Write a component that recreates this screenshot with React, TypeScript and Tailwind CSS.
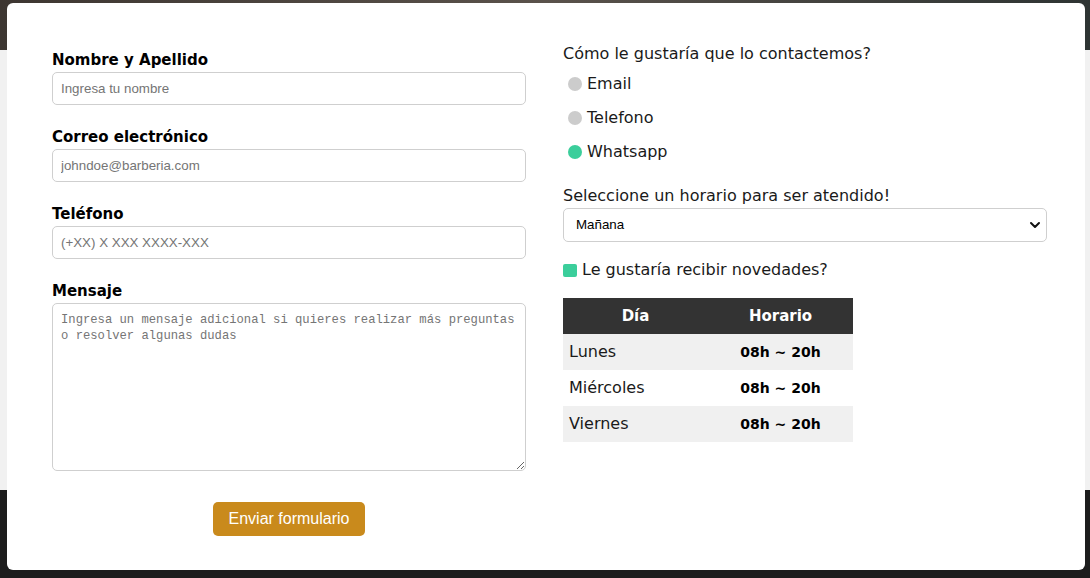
import React from 'react';

const horarios = [
  { dia: 'Lunes', hora: '08h ~ 20h' },
  { dia: 'Miércoles', hora: '08h ~ 20h' },
  { dia: 'Viernes', hora: '08h ~ 20h' },
];

const contactOptions = [
  { label: 'Email', checked: false },
  { label: 'Telefono', checked: false },
  { label: 'Whatsapp', checked: true },
];

const Field = ({ label, placeholder, type = 'text' }: { label: string; placeholder: string; type?: string }) => (
  <div className="mb-[20px]">
    <label className="block text-[15px] leading-[24px] font-bold text-black">{label}</label>
    <input
      type={type}
      placeholder={placeholder}
      className="block w-full h-[33px] px-[8px] border border-[#cfcfcf] rounded-[5px] bg-white text-[13.33px] font-['Liberation_Sans',Arial,sans-serif] placeholder:text-[#757575] outline-none"
    />
  </div>
);

export default function App() {
  return (
    <div className="relative w-full h-[578px] overflow-hidden font-['DejaVu_Sans',sans-serif]">
      {/* page behind the modal */}
      <div className="flex flex-col h-full">
        <div className="h-[50px] bg-gradient-to-r from-[#3d3631] via-[#5a524b] to-[#2e3433]" />
        <div className="h-[440px] bg-[#f1f1f1]" />
        <div className="flex-1 bg-[#1d1d1d]" />
      </div>

      <div className="absolute left-[7px] top-[3px] w-[1078px] h-[567px] bg-white rounded-[6px]">
        <div className="flex gap-[37px] pl-[45px] pt-[39px]">
          {/* left column */}
          <form className="w-[474px] pt-[6px]">
            <Field label="Nombre y Apellido" placeholder="Ingresa tu nombre" />
            <Field label="Correo electrónico" placeholder="johndoe@barberia.com" type="email" />
            <Field label="Teléfono" placeholder="(+XX) X XXX XXXX-XXX" type="tel" />
            <div>
              <label className="block text-[15px] leading-[24px] font-bold text-black">Mensaje</label>
              <textarea
                placeholder="Ingresa un mensaje adicional si quieres realizar más preguntas o resolver algunas dudas"
                className="block w-full h-[168px] px-[8px] py-[9px] border border-[#cfcfcf] rounded-[5px] text-[12.2px] leading-[15.5px] font-['Liberation_Mono',monospace] placeholder:text-[#757575] outline-none"
              />
            </div>
            <div className="flex justify-center mt-[31px]">
              <button
                type="button"
                className="h-[34px] px-[16px] rounded-[5px] bg-[#c98a1c] text-white text-[16px] font-['Liberation_Sans',Arial,sans-serif]"
              >
                Enviar formulario
              </button>
            </div>
          </form>

          {/* right column */}
          <div className="w-[484px] text-[#1a1a1a]">
            <p className="text-[16px] leading-[24px] mb-[6px]">Cómo le gustaría que lo contactemos?</p>
            <div className="flex flex-col gap-[10px]">
              {contactOptions.map((o) => (
                <div key={o.label} className="flex items-center h-[24px] text-[16px]">
                  <span
                    className={
                      o.checked
                        ? 'ml-[5px] mr-[5px] w-[14px] h-[14px] rounded-full bg-[#3bce9b]'
                        : 'ml-[5px] mr-[5px] w-[14px] h-[14px] rounded-full bg-[#cccccc]'
                    }
                  />
                  <span>{o.label}</span>
                </div>
              ))}
            </div>

            <p className="text-[16px] leading-[24px] mt-[20px]">Seleccione un horario para ser atendido!</p>
            <div className="flex items-center justify-between h-[34px] border border-[#cfcfcf] rounded-[5px] pl-[12px] pr-[5px] text-[13.33px] text-black font-['Liberation_Sans',Arial,sans-serif]">
              <span>Mañana</span>
              <svg width="12" height="12" viewBox="0 0 12 12" fill="none">
                <path d="M2 4l4 4 4-4" stroke="#111" strokeWidth="2" strokeLinecap="round" strokeLinejoin="round" />
              </svg>
            </div>

            <div className="flex items-center h-[24px] mt-[16px] text-[16px]">
              <span className="mr-[5px] w-[14px] h-[13px] rounded-[2px] bg-[#3bce9b]" />
              <span>Le gustaría recibir novedades?</span>
            </div>

            <table className="mt-[16px] w-[290px] border-collapse text-[16px]">
              <thead>
                <tr className="bg-[#333333] text-white h-[36px] text-[15px]">
                  <th className="w-[145px] font-bold text-center">Día</th>
                  <th className="w-[145px] font-bold text-center">Horario</th>
                </tr>
              </thead>
              <tbody>
                {horarios.map((h, i) => (
                  <tr key={h.dia} className={i % 2 === 0 ? 'h-[36px] bg-[#f0f0f0]' : 'h-[36px] bg-white'}>
                    <td className="pl-[6px] text-left">{h.dia}</td>
                    <td className="text-center font-bold text-black text-[14px]">{h.hora}</td>
                  </tr>
                ))}
              </tbody>
            </table>
          </div>
        </div>
      </div>
    </div>
  );
}
